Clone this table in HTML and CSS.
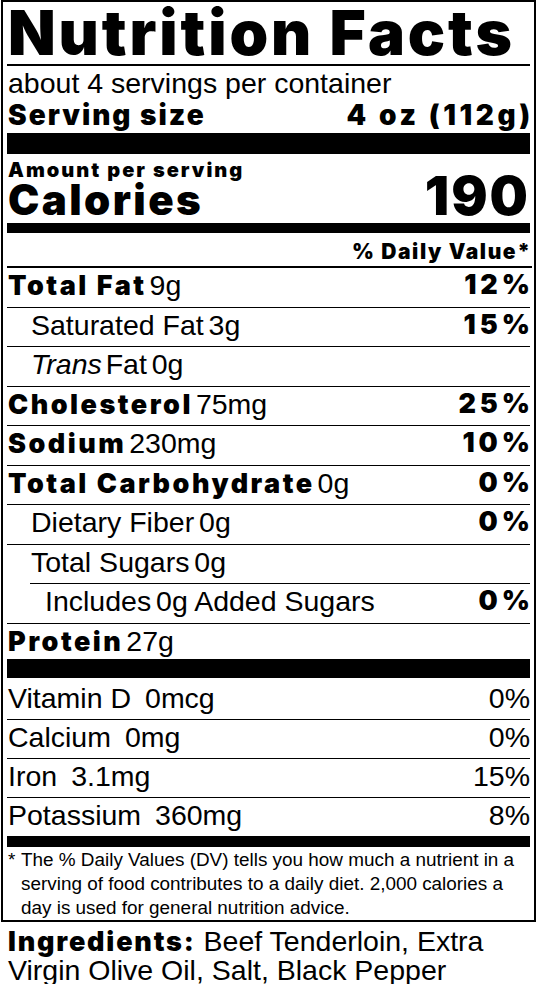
FILE: index.html
```html
<!DOCTYPE html>
<html lang="en">
<head>
<meta charset="utf-8">
<title>Nutrition Facts</title>
<link rel="stylesheet" href="styles.css">
</head>
<body>
<section class="label">
  <h1 class="title">Nutrition Facts</h1>
  <div class="servings">
    <p class="per-container">about 4 servings per container</p>
    <p class="serving-size"><span class="ss-label">Serving size</span><span class="ss-value">4 oz (112g)</span></p>
  </div>
  <div class="cal-block">
    <p class="amount">Amount per serving</p>
    <p class="calories"><span class="cal-label">Calories</span><span class="cal-num">190</span></p>
  </div>
  <p class="dv-head">% Daily Value*</p>
  <ul class="nutrients">
    <li class="row"><span><b class="hv">Total Fat</b> <span class="amt">9g</span></span><b class="hv pct">12%</b></li>
    <li class="row indent"><span>Saturated Fat <span class="amt">3g</span></span><b class="hv pct">15%</b></li>
    <li class="row indent"><span><i class="trans">Trans</i> Fat <span class="amt">0g</span></span></li>
    <li class="row"><span><b class="hv">Cholesterol</b> <span class="amt">75mg</span></span><b class="hv pct">25%</b></li>
    <li class="row"><span><b class="hv">Sodium</b> <span class="amt">230mg</span></span><b class="hv pct">10%</b></li>
    <li class="row"><span><b class="hv">Total Carbohydrate</b> <span class="amt">0g</span></span><b class="hv pct">0%</b></li>
    <li class="row indent"><span>Dietary Fiber <span class="amt">0g</span></span><b class="hv pct">0%</b></li>
    <li class="row sugars"><span>Total Sugars <span class="amt">0g</span></span></li>
    <li class="row indent2"><span>Includes <span class="amt">0g</span> Added Sugars</span><b class="hv pct">0%</b></li>
    <li class="row protein"><span><b class="hv">Protein</b> <span class="amt">27g</span></span></li>
  </ul>
  <ul class="vitamins">
    <li class="vrow"><span class="vname">Vitamin D</span><span class="vamt">0mcg</span><span class="vpct">0%</span></li>
    <li class="vrow"><span class="vname">Calcium</span><span class="vamt">0mg</span><span class="vpct">0%</span></li>
    <li class="vrow"><span class="vname">Iron</span><span class="vamt">3.1mg</span><span class="vpct">15%</span></li>
    <li class="vrow last"><span class="vname">Potassium</span><span class="vamt">360mg</span><span class="vpct">8%</span></li>
  </ul>
  <div class="footnote">
    <span class="star">*</span>
    <p class="note-text">The % Daily Values (DV) tells you how much a nutrient in a serving of food contributes to a daily diet. 2,000 calories a day is used for general nutrition advice.</p>
  </div>
</section>
<p class="ingredients"><b class="hv">Ingredients:</b> Beef Tenderloin, Extra Virgin Olive Oil, Salt, Black Pepper</p>
</body>
</html>
```
FILE: styles.css
```css
* { box-sizing: border-box; }

body {
  margin: 0;
  background: #fff;
  color: #000;
  font-family: "Liberation Sans", Arial, sans-serif;
}

p, h1, ul { margin: 0; padding: 0; }
ul { list-style: none; }

.hv {
  font-family: Inter, "Liberation Sans", sans-serif;
  font-weight: 900;
}

.label {
  margin: 0 1px 0 1px;
  border: 2px solid #000;
  padding: 0 4px 0 4px;
}

.title {
  font-family: Inter, "Liberation Sans", sans-serif;
  font-weight: 900;
  font-size: 62px;
  line-height: 62px;
  height: 64px;
  letter-spacing: 2.9px;
  border-bottom: 2px solid #000;
  padding-left: 1px;
  white-space: nowrap;
}

.servings {
  height: 88px;
  border-bottom: 21px solid #000;
  padding: 2px 0 0 1px;
}

.per-container {
  font-size: 28.5px;
  line-height: 30px;
}

.serving-size {
  margin-top: 1px;
  display: flex;
  justify-content: space-between;
  font-family: Inter, sans-serif;
  font-weight: 900;
  font-size: 28px;
  line-height: 32px;
}

.ss-label { letter-spacing: 2px; }
.ss-value { letter-spacing: 3.6px; margin-right: -3.6px; }

.cal-block {
  height: 79px;
  border-bottom: 10px solid #000;
  padding: 5px 0 0 1px;
  font-family: Inter, sans-serif;
  font-weight: 900;
}

.amount {
  font-size: 20px;
  line-height: 22px;
  letter-spacing: 2px;
}

.calories {
  display: flex;
  justify-content: space-between;
  align-items: baseline;
}

.cal-label {
  font-size: 42px;
  line-height: 38px;
  letter-spacing: 2.4px;
}

.cal-num {
  font-size: 54px;
  line-height: 30px;
  letter-spacing: 2px;
}

.dv-head {
  height: 35px;
  font-family: Inter, sans-serif;
  font-weight: 900;
  font-size: 21px;
  line-height: 26px;
  letter-spacing: 1.6px;
  text-align: right;
  padding: 6px 0 0;
  margin-right: -1.6px;
  border-bottom: 2px solid #000;
}

.row {
  display: flex;
  justify-content: space-between;
  height: 39.5px;
  font-size: 28.5px;
  line-height: 34.5px;
  padding: 0 0 0 1px;
  border-bottom: 1px solid #000;
  font-family: "Liberation Sans", sans-serif;
}

.row .hv {
  font-size: 27px;
  letter-spacing: 2.5px;
}

.row .pct {
  letter-spacing: 4px;
  margin-right: -4px;
}

.trans { margin-right: -4px; }

.amt { margin-left: -3px; }
.row .hv + .amt { margin-left: -5px; }

.indent { padding-left: 24px; }

.sugars {
  margin-left: 23px;
  padding-left: 1px;
}

.indent2 { padding-left: 38px; }

.row.protein {
  height: 54px;
  border-bottom: 19px solid #000;
}

.vitamins {
  padding-top: 3px;
}

.vrow {
  display: flex;
  height: 39px;
  font-size: 28.5px;
  line-height: 34.5px;
  padding: 0 0 0 1px;
  border-bottom: 1px solid #000;
}

.vamt { margin-left: 14px; }
.vpct { margin-left: auto; }

.vrow.last {
  height: 49px;
  border-bottom: 11px solid #000;
}

.footnote {
  display: flex;
  font-size: 18.9px;
  line-height: 24px;
  padding: 1px 0 0 1px;
}

.star { width: 13px; flex: none; }

.ingredients {
  margin: 5px 0 0 8px;
  padding-right: 20px;
  font-size: 28.5px;
  line-height: 28px;
}

.ingredients .hv {
  font-size: 27px;
  letter-spacing: 1.8px;
}
```
